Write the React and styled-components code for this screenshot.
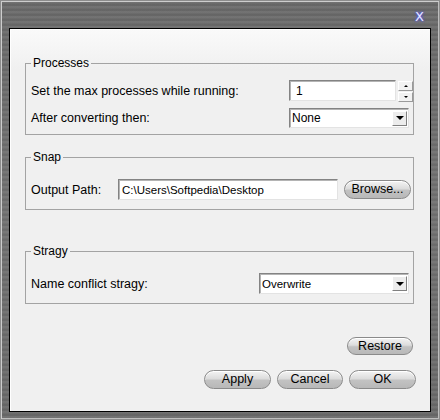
import React from 'react'
import styled, { createGlobalStyle } from 'styled-components'

const Global = createGlobalStyle`
  html, body {
    margin: 0;
    padding: 0;
    background: #6b6b6b;
  }
  body {
    font-family: 'Liberation Sans', Arial, sans-serif;
  }
`

const Window = styled.div`
  width: 440px;
  height: 420px;
  box-sizing: border-box;
  border: 1px solid #8c8c8c;
  box-shadow: inset 1px 1px 0 #cdcdcd, inset -1px -1px 0 #bdbdbd;
  background:
    repeating-linear-gradient(
      180deg,
      rgba(255, 255, 255, 0.05) 0px,
      rgba(255, 255, 255, 0.05) 2px,
      rgba(0, 0, 0, 0.05) 3px,
      rgba(0, 0, 0, 0.03) 5px
    ),
    linear-gradient(180deg, #6a6a6a, #727272 50%, #6a6a6a);
  display: flex;
  flex-direction: column;
`

const TitleBar = styled.div`
  height: 27px;
  display: flex;
  justify-content: flex-end;
  align-items: center;
  padding-right: 15px;
`

const Close = styled.span`
  font-family: 'DejaVu Sans', sans-serif;
  font-size: 13px;
  line-height: 13px;
  color: #e6e8ff;
  text-shadow: 0 0 2px #5a5cff, 0 0 3px #4a4cf0;
  margin-top: 4px;
`

const Panel = styled.div`
  height: 384px;
  margin: 0 8px;
  box-sizing: border-box;
  border: 1px solid #000;
  box-shadow: inset 1px 1px 0 #fff;
  background: linear-gradient(180deg, #fafafa 0px, #f0f0f0 40px);
  padding: 27px 16px 0 15px;
  display: flex;
  flex-direction: column;
`

const Group = styled.fieldset`
  margin: ${p => p.$top}px 0 0 0;
  padding: ${p => p.$pt}px 0 ${p => p.$pb}px 5px;
  border: 1px solid #a3a3a3;
  min-inline-size: 0;
  display: flex;
  flex-direction: column;
  gap: 7px;
`

const Legend = styled.legend`
  font-size: 12px;
  line-height: 14px;
  color: #000;
  padding: 0 2px 0 2px;
`

const Row = styled.div`
  display: flex;
  align-items: center;
  height: ${p => p.$h || 21}px;
`

const Label = styled.span`
  flex: 1;
  font-size: 12.5px;
  color: #000;
  white-space: nowrap;
`

const sunken = `
  box-sizing: border-box;
  background: #fff;
  border: 1px solid;
  border-color: #838383 #e3e3e3 #e3e3e3 #838383;
  box-shadow: inset 1px 1px 0 #b4b4b4;
`

const TextBox = styled.div`
  ${sunken}
  width: ${p => p.$w}px;
  height: ${p => p.$h || 21}px;
  margin-right: ${p => p.$mr || 0}px;
  display: flex;
  align-items: center;
  padding-left: ${p => p.$pl || 3}px;
  font-size: ${p => p.$fs || 11.5}px;
  color: #000;
`

const Spin = styled.div`
  display: flex;
  flex-direction: column;
  gap: 1px;
  margin-left: 2px;
  margin-top: 2px;
`

const SpinBtn = styled.div`
  width: 15px;
  height: 10px;
  box-sizing: border-box;
  background: #f2f2f2;
  border: 1px solid;
  border-color: #fff #9a9a9a #9a9a9a #fff;
  display: flex;
  align-items: center;
  justify-content: center;
  &::after {
    content: '';
    border-left: 2px solid transparent;
    border-right: 2px solid transparent;
    ${p => (p.$down ? 'border-top: 2px solid #000;' : 'border-bottom: 2px solid #000;')}
  }
`

const Select = styled(TextBox)`
  justify-content: space-between;
  padding: 0 1px 0 2px;
`

const Arrow = styled.div`
  width: 15px;
  height: 15px;
  box-sizing: border-box;
  background: #ececec;
  border: 1px solid;
  border-color: #fff #808080 #808080 #fff;
  display: flex;
  align-items: center;
  justify-content: center;
  &::after {
    content: '';
    border-left: 4px solid transparent;
    border-right: 4px solid transparent;
    border-top: 4px solid #000;
  }
`

const Pill = styled.button`
  width: ${p => p.$w}px;
  height: ${p => p.$h || 19}px;
  margin: 0 ${p => p.$mr || 0}px 0 ${p => p.$ml || 0}px;
  padding: 0 0 1px 0;
  box-sizing: border-box;
  border: 1px solid #8a8a8a;
  border-radius: 10px;
  background: linear-gradient(180deg, #f4f4f4 0%, #dcdcdc 45%, #c2c2c2 55%, #b8b8b8 100%);
  box-shadow: inset 0 1px 0 #fff;
  font-family: 'Liberation Sans', Arial, sans-serif;
  font-size: 12.5px;
  color: #000;
`

const Actions = styled.div`
  display: flex;
  justify-content: flex-end;
  gap: 6px;
  margin-top: ${p => p.$top}px;
  margin-right: ${p => p.$mr || 0}px;
`

export default function App() {
  return (
    <>
      <Global />
      <Window>
        <TitleBar>
          <Close>X</Close>
        </TitleBar>
        <Panel>
          <Group $top={0} $pt={10} $pb={6}>
            <Legend>Processes</Legend>
            <Row>
              <Label>Set the max processes while running:</Label>
              <TextBox $w={107} $pl={6} $fs={12}>1</TextBox>
              <Spin>
                <SpinBtn />
                <SpinBtn $down />
              </Spin>
            </Row>
            <Row $h={20}>
              <Label>After converting then:</Label>
              <Select $w={120} $h={20} $mr={4} $fs={12}>
                None
                <Arrow />
              </Select>
            </Row>
          </Group>

          <Group $top={15} $pt={15} $pb={9}>
            <Legend>Snap</Legend>
            <Row>
              <Label>Output Path:</Label>
              <TextBox $w={220}>C:\Users\Softpedia\Desktop</TextBox>
              <Pill $w={67} $ml={6} $mr={2}>Browse...</Pill>
            </Row>
          </Group>

          <Group $top={34} $pt={15} $pb={9}>
            <Legend>Stragy</Legend>
            <Row>
              <Label>Name conflict stragy:</Label>
              <Select $w={150} $mr={4}>
                Overwrite
                <Arrow />
              </Select>
            </Row>
          </Group>

          <Actions $top={33} $mr={1}>
            <Pill $w={66} $h={18}>Restore</Pill>
          </Actions>
          <Actions $top={15} $mr={-2}>
            <Pill $w={67}>Apply</Pill>
            <Pill $w={66}>Cancel</Pill>
            <Pill $w={67}>OK</Pill>
          </Actions>
        </Panel>
      </Window>
    </>
  )
}
